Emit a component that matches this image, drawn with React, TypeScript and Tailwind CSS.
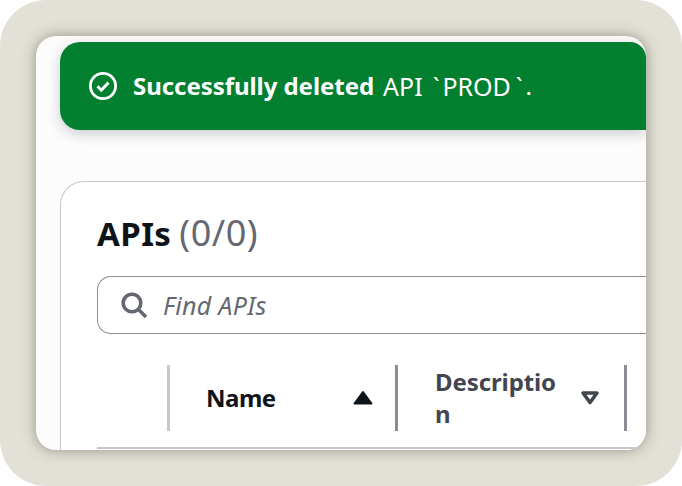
export default function App() {
  return (
    <div className="w-[682px] h-[486px] bg-white overflow-hidden font-['Noto_Sans',sans-serif]">
      <div className="w-full h-full rounded-[46px] bg-[#e3e1d7] p-[36px] pb-[36px]">
        <div className="h-[414px] rounded-[20px] bg-[#fcfcfd] overflow-hidden shadow-[0_0_14px_rgba(70,65,50,0.5)] pl-[24px] pt-[6px]">
          <div className="h-[88px] bg-[#037f30] rounded-l-[20px] rounded-tr-[16px] flex items-center pl-[29px] gap-[16px] text-white text-[24px] shadow-[0_4px_14px_rgba(15,20,26,0.2)]">
            <svg width="28" height="28" viewBox="0 0 28 28" fill="none" stroke="white" strokeWidth="2.8" className="shrink-0">
              <circle cx="14" cy="14" r="12.6" />
              <path d="M8.4 14.3l3.9 3.9 7.2-7.6" strokeWidth="3" />
            </svg>
            <span className="whitespace-nowrap leading-none flex">
              <b className="font-bold tracking-[-0.05px]">Successfully deleted</b>
              <span className="ml-[9px] text-[25px] leading-[24px]">API</span>
              <span className="ml-[10px]">`</span>
              <span className="ml-[3px] text-[25px] leading-[24px]">PROD</span>
              <span className="ml-[5px]">`</span>
              <span className="ml-[3px]">.</span>
            </span>
          </div>
          <div className="mt-[51px] h-[400px] bg-white border border-[#c6c6cd] border-r-0 rounded-tl-[24px] pl-[36px] pt-[29px]">
            <h1 className="h-[46px] flex items-baseline gap-[8px] text-[33px] leading-[44px] font-bold text-[#0f141a] whitespace-nowrap">
              <span className="tracking-[0.4px]">APIs</span>
              <span className="font-normal text-[#656871] text-[36px] leading-[44px] tracking-[0.5px]">(0/0)</span>
            </h1>
            <div className="mt-[19px] h-[58px] border-[1.5px] border-r-0 border-[#8c8c94] rounded-l-[14px] flex items-center pl-[22px] gap-[15px]">
              <svg width="28" height="28" viewBox="0 0 28 28" fill="none" stroke="#656871" strokeWidth="3.6" className="shrink-0">
                <circle cx="12" cy="12" r="8.8" />
                <path d="M18.5 18.5l7.5 7.5" />
              </svg>
              <span className="italic text-[25px] text-[#656871] leading-none tracking-[0.3px]">Find APIs</span>
            </div>
            <div className="mt-[31px] flex h-[66px] pl-[70px]">
              <div className="w-[3px] bg-[#c6c6cd]" />
              <div className="w-[225px] flex items-center pl-[36px] pr-[22px] justify-between">
                <span className="text-[24px] font-bold text-[#0f141a] tracking-[-0.5px]">Name</span>
                <svg width="20" height="16" viewBox="0 0 20 16" fill="#0f141a" stroke="#0f141a" strokeWidth="2" strokeLinejoin="round">
                  <path d="M10 2L18.5 13.5H1.5Z" />
                </svg>
              </div>
              <div className="w-[3px] bg-[#8c8c94]" />
              <div className="w-[226px] flex items-center pl-[37px] pr-[24px] justify-between">
                <span className="w-[125px] text-[24px] leading-[32px] font-bold text-[#424650] break-all tracking-[-0.1px]">Description</span>
                <svg width="20" height="16" viewBox="0 0 20 16" fill="none" stroke="#424650" strokeWidth="3.6" strokeLinejoin="round">
                  <path d="M3 3H17L10 12.5Z" />
                </svg>
              </div>
              <div className="w-[3px] bg-[#8c8c94]" />
            </div>
            <div className="mt-[16px] h-[2px] bg-[#c6c6cd]" />
          </div>
        </div>
      </div>
    </div>
  );
}
